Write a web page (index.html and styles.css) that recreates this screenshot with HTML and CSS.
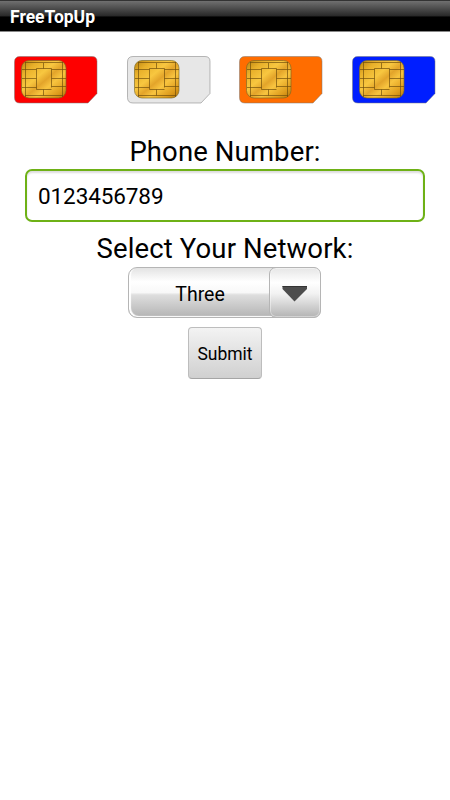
FILE: index.html
```html
<!DOCTYPE html>
<html lang="en">
<head>
<meta charset="utf-8">
<title>FreeTopUp</title>
<link rel="stylesheet" href="styles.css">
</head>
<body>
<svg class="defs" width="0" height="0" aria-hidden="true">
  <defs>
    <linearGradient id="gold" x1="0" y1="0" x2="1" y2="1">
      <stop offset="0" stop-color="#b9820f"/>
      <stop offset=".2" stop-color="#e8b02a"/>
      <stop offset=".4" stop-color="#f8c740"/>
      <stop offset=".53" stop-color="#e3a42a"/>
      <stop offset=".65" stop-color="#f8c43f"/>
      <stop offset=".85" stop-color="#dd9b1c"/>
      <stop offset="1" stop-color="#b0740a"/>
    </linearGradient>
    <symbol id="sim" viewBox="0 0 86 50">
      <path d="M7 1.500H79Q84 1.500 84 6.500V38.500L75 48H7Q1.500 48 1.500 42.500V7Q1.500 1.500 7 1.500Z" fill="currentColor" stroke="#777" stroke-opacity=".5"/>
      <rect x="8.500" y="5.500" width="44.500" height="37.500" rx="7.500" fill="url(#gold)" stroke="#7b6825" stroke-opacity=".65"/>
      <path d="M9 14.500H23.500M9 23.500H23.500M9 32.500H23.500M38.500 14.500H53M38.500 23.500H53M38.500 31.500H53M12.500 7V42M49.500 7V42M12 7.500H50M12 40.500H50M30.500 8V13.500M30.500 34.500V40.500M23.500 34.500V13.500H38.500V32.500M23.500 34.500H38.500" fill="none" stroke="#6e4d0b" stroke-opacity=".68"/>
    </symbol>
  </defs>
</svg>
<header class="title-bar">FreeTopUp</header>
<main>
  <div class="sims">
    <svg class="sim red"><use href="#sim"/></svg>
    <svg class="sim white"><use href="#sim"/></svg>
    <svg class="sim orange"><use href="#sim"/></svg>
    <svg class="sim blue"><use href="#sim"/></svg>
  </div>
  <form class="form">
    <label class="label phone-label" for="phone">Phone Number:</label>
    <input class="phone" id="phone" type="text" value="0123456789">
    <div class="label network-label">Select Your Network:</div>
    <div class="spinner">
      <span class="value">Three</span>
      <span class="drop"><svg width="26" height="16" viewBox="0 0 26 16"><path d="M.5 0H25V3L12.500 15.500L.5 3Z" fill="#4d4d4d"/><path d="M.5 .5H25" stroke="#333"/></svg></span>
    </div>
    <button class="submit" type="button">Submit</button>
  </form>
</main>
</body>
</html>
```
FILE: styles.css
```css
* { box-sizing: border-box; }
body {
  margin: 0;
  min-height: 800px;
  background: #fff;
  color: #000;
  font-family: Roboto, "Liberation Sans", sans-serif;
}
.defs { display: block; }
.title-bar {
  height: 32px;
  padding: 3px 0 0 10px;
  border-top: 1px solid #333;
  border-bottom: 1px solid #888;
  background: linear-gradient(#707070 0, #282828 50%, #000 53%, #000 100%) padding-box;
  color: #fff;
  font-size: 17.500px;
  font-weight: 700;
  line-height: 26px;
}
.sims {
  display: flex;
  justify-content: space-between;
  padding: 23px 13px 0;
}
.sim { display: block; width: 86px; height: 50px; }
.red { color: #fe0000; }
.white { color: #e7e7e7; }
.orange { color: #ff6d00; }
.blue { color: #001eff; }
.form {
  display: flex;
  flex-direction: column;
  align-items: center;
  padding: 29px 25px 0;
}
.label {
  height: 35px;
  font-size: 27.500px;
  line-height: 35px;
  letter-spacing: .12px;
  white-space: nowrap;
}
.phone {
  width: 400px;
  height: 53px;
  padding: 0 11px;
  border: 2px solid #6eb116;
  border-radius: 7px;
  background: #fff;
  box-shadow: inset 0 2px 2px #ddd;
  color: #000;
  font: 22.500px Roboto, sans-serif;
  letter-spacing: -.1px;
  outline: 0;
}
.network-label { margin-top: 9px; }
.spinner {
  display: flex;
  width: 193px;
  height: 51px;
  margin: 1px 1px 0 0;
  border: 1px solid #b5b5b5;
  border-radius: 9px;
  background: linear-gradient(#e3e3e3, #fff 28%, #f8f8f8 50%, #dedede 55%, #b4b4b4);
  box-shadow: inset 2px -1px 1px #fff;
}
.value {
  flex: 1;
  padding-left: 2px;
  font-size: 19.500px;
  line-height: 54px;
  text-align: center;
}
.drop {
  display: flex;
  align-items: center;
  justify-content: center;
  width: 52px;
  height: 51px;
  margin: -1px -1px 0 0;
  padding-top: 3px;
  border: 1px solid #b5b5b5;
  border-radius: 7px;
  background: linear-gradient(#e6e6e6, #fff 30%, #f2f2f2 52%, #b4b4b4);
  box-shadow: inset 0 0 0 1px rgba(255, 255, 255, .4);
}
.submit {
  width: 74px;
  height: 52px;
  margin-top: 9px;
  padding: 2px 0 0;
  border: 1px solid #bdbdbd;
  border-bottom-color: #a5a5a5;
  border-radius: 4px;
  background: linear-gradient(#f3f3f3, #d0d0d0);
  color: #000;
  font: 17.500px Roboto, sans-serif;
}
```
